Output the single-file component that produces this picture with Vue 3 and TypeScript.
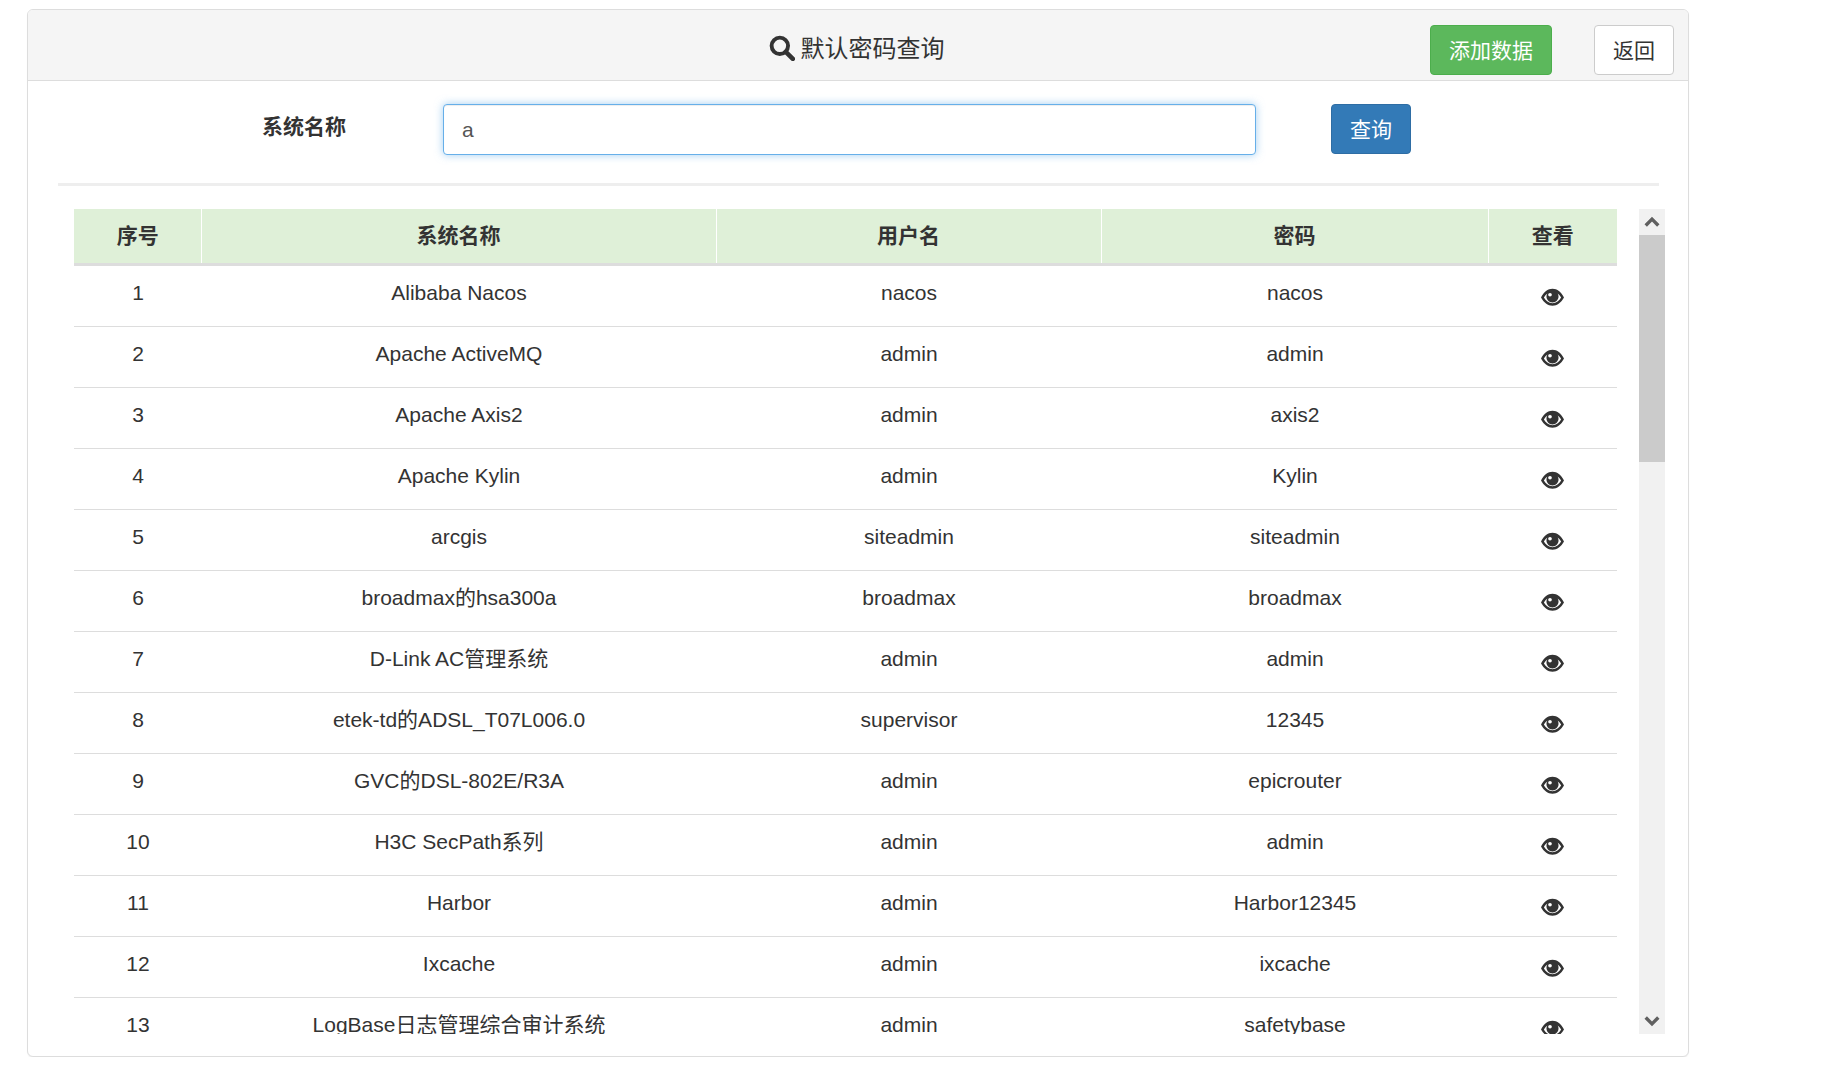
<script setup lang="ts">
interface Row { name: string; user: string; pwd: string }
const rows: Row[] = [
  { name: 'Alibaba Nacos', user: 'nacos', pwd: 'nacos' },
  { name: 'Apache ActiveMQ', user: 'admin', pwd: 'admin' },
  { name: 'Apache Axis2', user: 'admin', pwd: 'axis2' },
  { name: 'Apache Kylin', user: 'admin', pwd: 'Kylin' },
  { name: 'arcgis', user: 'siteadmin', pwd: 'siteadmin' },
  { name: 'broadmax的hsa300a', user: 'broadmax', pwd: 'broadmax' },
  { name: 'D-Link AC管理系统', user: 'admin', pwd: 'admin' },
  { name: 'etek-td的ADSL_T07L006.0', user: 'supervisor', pwd: '12345' },
  { name: 'GVC的DSL-802E/R3A', user: 'admin', pwd: 'epicrouter' },
  { name: 'H3C SecPath系列', user: 'admin', pwd: 'admin' },
  { name: 'Harbor', user: 'admin', pwd: 'Harbor12345' },
  { name: 'Ixcache', user: 'admin', pwd: 'ixcache' },
  { name: 'LogBase日志管理综合审计系统', user: 'admin', pwd: 'safetybase' },
]
</script>

<template>
  <div class="page">
    <section class="panel">
      <header class="head">
        <span></span>
        <h3 class="title">
          <svg class="search" viewBox="0 0 24 24" aria-hidden="true">
            <circle cx="10" cy="10" r="7.6" fill="none" stroke="#333" stroke-width="3.6" />
            <path d="M15.5 15.5L22 22" stroke="#333" stroke-width="4.2" stroke-linecap="round" />
          </svg>
          <span>默认密码查询</span>
        </h3>
        <div class="actions">
          <button class="btn green">添加数据</button>
          <button class="btn plain">返回</button>
        </div>
      </header>

      <div class="body">
        <form class="search-row" @submit.prevent>
          <label class="label">系统名称</label>
          <input class="field" value="a" />
          <button class="btn blue">查询</button>
        </form>
        <div class="rule"></div>

        <div class="results">
          <div class="clip">
            <table class="grid">
              <colgroup>
                <col style="width: 127px" />
                <col style="width: 515px" />
                <col style="width: 385px" />
                <col style="width: 387px" />
                <col style="width: 129px" />
              </colgroup>
              <thead>
                <tr>
                  <th>序号</th>
                  <th>系统名称</th>
                  <th>用户名</th>
                  <th>密码</th>
                  <th>查看</th>
                </tr>
              </thead>
              <tbody>
                <tr v-for="(r, i) in rows" :key="i">
                  <td>{{ i + 1 }}</td>
                  <td>{{ r.name }}</td>
                  <td>{{ r.user }}</td>
                  <td>{{ r.pwd }}</td>
                  <td>
                    <svg class="eye" viewBox="0 0 24 18" aria-hidden="true">
                      <path fill-rule="evenodd" fill="#333" d="M0 9.4C3 4 7 .4 12 .4S21 4 24 9.4C21 14.6 17 18 12 18S3 14.6 0 9.4ZM3 9.4C5 12.8 8 15.4 12 15.4S19 12.8 21 9.4C20 7.8 18.8 6.4 17.4 5.3C18 6.3 18.3 7.4 18.3 8.6C18.3 12 15.5 14.8 12 14.8S5.7 12 5.7 8.6C5.7 7.4 6 6.3 6.6 5.3C5.2 6.4 4 7.8 3 9.4Z" />
                      <circle cx="9.4" cy="6.6" r="1.9" fill="#fff" />
                    </svg>
                  </td>
                </tr>
              </tbody>
            </table>
          </div>
          <div class="scrollbar" aria-hidden="true">
            <div class="sb-btn">
              <svg viewBox="0 0 14 10" class="chev"><path d="M1.5 8L7 2.5L12.5 8" fill="none" stroke="#606060" stroke-width="3" /></svg>
            </div>
            <div class="sb-thumb"></div>
            <div class="sb-track"></div>
            <div class="sb-btn">
              <svg viewBox="0 0 14 10" class="chev"><path d="M1.5 2L7 7.5L12.5 2" fill="none" stroke="#606060" stroke-width="3" /></svg>
            </div>
          </div>
        </div>
      </div>
    </section>
  </div>
</template>

<style scoped>
.page {
  padding: 9px 0 0 27px;
  width: 1662px;
  font-family: "Liberation Sans", "Noto Sans CJK SC", sans-serif;
  font-size: 21px;
  line-height: 30px;
  color: #333;
}
.panel {
  box-sizing: border-box;
  width: 1662px;
  height: 1048px;
  background: #fff;
  border: 1px solid #ddd;
  border-radius: 6px;
  box-shadow: 0 1px 1px rgba(0, 0, 0, 0.05);
  overflow: hidden;
}
.head {
  box-sizing: border-box;
  height: 71px;
  display: grid;
  grid-template-columns: 1fr auto 1fr;
  align-items: start;
  background: #f5f5f5;
  border-bottom: 1px solid #ddd;
  padding: 15px 14px 0;
}
.title {
  margin: 0;
  padding: 7px 3px 0 0;
  display: flex;
  align-items: center;
  gap: 6px;
  font-size: 24px;
  font-weight: 400;
  line-height: 34px;
}
.search {
  width: 26px;
  height: 26px;
  flex: none;
  margin-top: -3px;
}
.actions {
  display: flex;
  justify-content: flex-end;
  gap: 42px;
}
.btn {
  box-sizing: border-box;
  height: 50px;
  padding: 2px 0 0;
  border: 1px solid transparent;
  border-radius: 4px;
  font: inherit;
  cursor: pointer;
}
.green {
  width: 122px;
  background: #5cb85c;
  border-color: #4cae4c;
  color: #fff;
}
.plain {
  width: 80px;
  background: #fff;
  border-color: #ccc;
  color: #333;
}
.blue {
  width: 80px;
  background: #337ab7;
  border-color: #2e6da4;
  color: #fff;
}
.body {
  padding: 23px 22px 0 30px;
}
.search-row {
  display: flex;
  align-items: flex-start;
  margin: 0;
  padding-left: 204px;
}
.label {
  width: 84px;
  margin-top: 8px;
  font-weight: 700;
}
.field {
  box-sizing: border-box;
  width: 813px;
  height: 51px;
  margin: 0 75px 0 97px;
  padding: 0 18px;
  border: 1px solid #66afe9;
  border-radius: 4px;
  outline: none;
  box-shadow: inset 0 1px 1px rgba(0, 0, 0, 0.075), 0 0 8px rgba(102, 175, 233, 0.6);
  font: inherit;
  font-size: 21px;
  color: #555;
}
.rule {
  height: 3px;
  margin: 28px 7px 23px 0;
  background: #eee;
}
.results {
  display: flex;
  height: 825px;
  margin-left: 16px;
  margin-right: -7px;
}
.clip {
  width: 1543px;
  height: 825px;
  overflow: hidden;
  flex: none;
}
.grid {
  width: 1543px;
  table-layout: fixed;
  border-collapse: collapse;
}
.grid th {
  box-sizing: border-box;
  height: 55px;
  padding: 0;
  background: #dff0d8;
  border-left: 1px solid #fff;
  border-bottom: 3px solid #ddd;
  font-weight: 700;
  text-align: center;
}
.grid th:first-child {
  border-left: 0;
  padding-left: 1px;
}
.grid td {
  box-sizing: border-box;
  height: 61px;
  padding: 12px 8px 18px 9px;
  border-bottom: 1px solid #ddd;
  text-align: center;
  vertical-align: top;
  white-space: nowrap;
}
.grid td:last-child {
  padding-left: 8px;
}
.eye {
  display: inline-block;
  width: 23px;
  height: 18px;
  vertical-align: -6px;
}
.scrollbar {
  width: 26px;
  height: 825px;
  margin-left: 22px;
  flex: none;
  display: flex;
  flex-direction: column;
  background: #f1f1f1;
}
.sb-btn {
  height: 26px;
  flex: none;
  display: flex;
  align-items: center;
  justify-content: center;
}
.chev {
  width: 16px;
  height: 12px;
}
.sb-thumb {
  height: 227px;
  flex: none;
  background: #cbcbcb;
}
.sb-track {
  flex: 1;
}
</style>
